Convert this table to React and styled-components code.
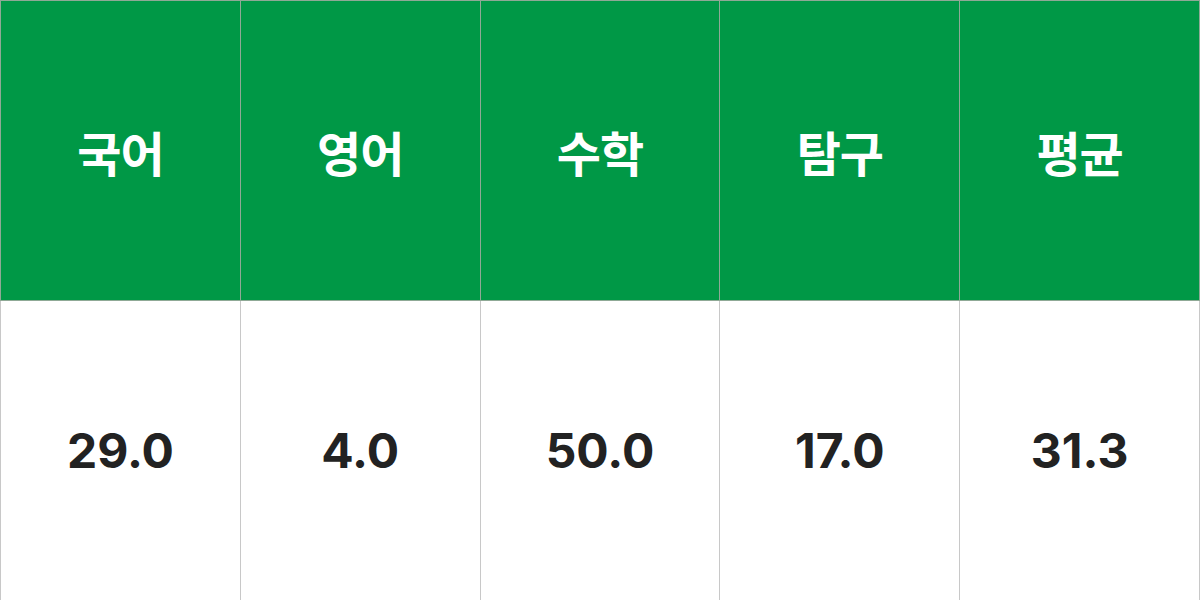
import React from 'react';
import styled, { createGlobalStyle } from 'styled-components';

const GlobalStyle = createGlobalStyle`
  html, body {
    margin: 0;
    padding: 0;
    background: #ffffff;
  }
  body {
    font-family: Inter, "Noto Sans CJK KR", sans-serif;
  }
`;

const Table = styled.table`
  width: 1200px;
  height: 600px;
  border-collapse: collapse;
  table-layout: fixed;
`;

const HeadCell = styled.th`
  height: 299px;
  padding: 0;
  border: 1px solid #8fa996;
  background-color: #009846;
  color: #ffffff;
  font-size: 48px;
  font-weight: 700;
  text-align: center;
  vertical-align: middle;
  letter-spacing: -1px;
`;

const ValueCell = styled.td`
  height: 299px;
  padding: 0;
  border: 1px solid #c8c8c8;
  background-color: #ffffff;
  color: #222222;
  font-size: 48px;
  font-weight: 700;
  text-align: center;
  vertical-align: middle;
`;

const scores = [
  { subject: '국어', value: '29.0' },
  { subject: '영어', value: '4.0' },
  { subject: '수학', value: '50.0' },
  { subject: '탐구', value: '17.0' },
  { subject: '평균', value: '31.3' },
];

export default function App() {
  return (
    <>
      <GlobalStyle />
      <Table>
        <thead>
          <tr>
            {scores.map((s) => (
              <HeadCell key={s.subject}>{s.subject}</HeadCell>
            ))}
          </tr>
        </thead>
        <tbody>
          <tr>
            {scores.map((s) => (
              <ValueCell key={s.subject}>{s.value}</ValueCell>
            ))}
          </tr>
        </tbody>
      </Table>
    </>
  );
}
